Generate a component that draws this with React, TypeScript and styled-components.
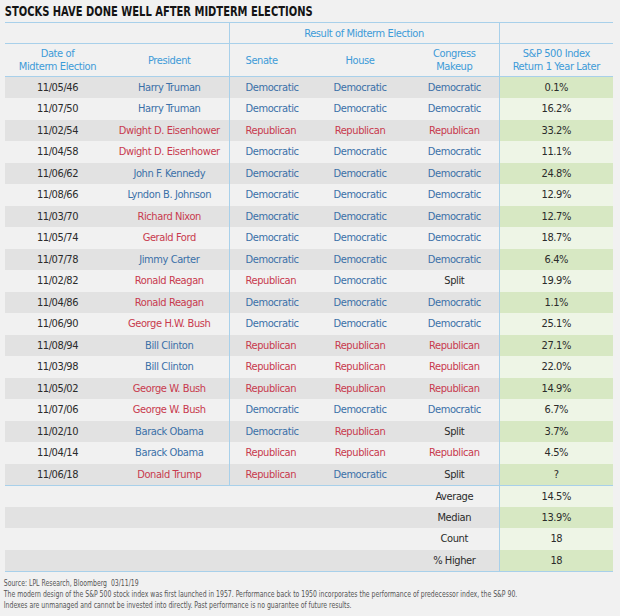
import React from 'react';
import styled, { createGlobalStyle } from 'styled-components';

const FONT = `"Liberation Sans Narrow", "DejaVu Sans Condensed", "Liberation Sans", sans-serif`;

const Global = createGlobalStyle`
  html, body {
    margin: 0;
    background: #f1f1f1;
  }
  body {
    font-family: ${FONT};
  }
`;

const Page = styled.div`
  width: 620px;
  height: 616px;
  background: #f1f1f1;
  overflow: hidden;
`;

const Title = styled.h1`
  margin: 0;
  padding-left: 6px;
  height: 22px;
  line-height: 22px;
  font-size: 14px;
  font-weight: 700;
  color: #141414;
  text-transform: uppercase;
  white-space: nowrap;
  transform: scaleX(0.79);
  transform-origin: 0 0;
`;

const Table = styled.table`
  margin-left: 5px;
  width: 608px;
  border-collapse: collapse;
  table-layout: fixed;
  font-size: 11px;
  letter-spacing: -0.4px;
`;

const TopRow = styled.tr`
  height: 21px;
  border-top: 1px solid #a8d0ea;
  border-bottom: 1px solid #a8d0ea;
`;

const ColRow = styled.tr`
  height: 33px;
  border-bottom: 1px solid #a8d0ea;
`;

const HeadCell = styled.th<{ $divider?: boolean; $align?: string }>`
  padding: 0;
  padding-left: ${p => (p.$align === 'left' ? '16px' : '0')};
  text-align: ${p => p.$align || 'center'};
  font-weight: 400;
  color: #3d9bd8;
  line-height: 13px;
  vertical-align: middle;
  border-left: ${p => (p.$divider ? '1px solid #a8d0ea' : 'none')};
`;

const Row = styled.tr<{ $dark: boolean }>`
  height: 21.5px;
  background: ${p => (p.$dark ? '#e2e2e2' : '#f1f1f1')};
`;

const SummaryRow = styled(Row)<{ $first?: boolean }>`
  border-top: ${p => (p.$first ? '1px solid #a8d0ea' : 'none')};
`;

const LastRow = styled(Row)`
  border-bottom: 1px solid #a8d0ea;
`;

const colors: Record<string, string> = {
  D: '#3a70a8',
  R: '#c83a4e',
  N: '#2b2b2b',
};

const Cell = styled.td<{ $tone?: string; $align?: string; $divider?: boolean }>`
  padding: 0;
  padding-left: ${p => (p.$align === 'left' ? '16px' : '0')};
  text-align: ${p => p.$align || 'center'};
  color: ${p => colors[p.$tone || 'N']};
  white-space: nowrap;
  border-left: ${p => (p.$divider ? '1px solid #a8d0ea' : 'none')};
`;

const ReturnCell = styled.td<{ $dark: boolean }>`
  padding: 0;
  text-align: center;
  color: #2b2b2b;
  border-left: 1px solid #a8d0ea;
  background: ${p => (p.$dark ? '#d7e8c3' : '#eef5e6')};
`;

const Notes = styled.div`
  width: 800px;
  padding: 6px 0 0 5px;
  font-size: 9px;
  line-height: 11px;
  color: #555;
  white-space: nowrap;
  transform: scaleX(0.76);
  transform-origin: 0 0;
`;

type Party = 'D' | 'R' | 'S';

interface Election {
  date: string;
  president: string;
  party: 'D' | 'R';
  senate: Party;
  house: Party;
  congress: Party;
  ret: string;
}

const data: Election[] = [
  { date: '11/05/46', president: 'Harry Truman', party: 'D', senate: 'D', house: 'D', congress: 'D', ret: '0.1%' },
  { date: '11/07/50', president: 'Harry Truman', party: 'D', senate: 'D', house: 'D', congress: 'D', ret: '16.2%' },
  { date: '11/02/54', president: 'Dwight D. Eisenhower', party: 'R', senate: 'R', house: 'R', congress: 'R', ret: '33.2%' },
  { date: '11/04/58', president: 'Dwight D. Eisenhower', party: 'R', senate: 'D', house: 'D', congress: 'D', ret: '11.1%' },
  { date: '11/06/62', president: 'John F. Kennedy', party: 'D', senate: 'D', house: 'D', congress: 'D', ret: '24.8%' },
  { date: '11/08/66', president: 'Lyndon B. Johnson', party: 'D', senate: 'D', house: 'D', congress: 'D', ret: '12.9%' },
  { date: '11/03/70', president: 'Richard Nixon', party: 'R', senate: 'D', house: 'D', congress: 'D', ret: '12.7%' },
  { date: '11/05/74', president: 'Gerald Ford', party: 'R', senate: 'D', house: 'D', congress: 'D', ret: '18.7%' },
  { date: '11/07/78', president: 'Jimmy Carter', party: 'D', senate: 'D', house: 'D', congress: 'D', ret: '6.4%' },
  { date: '11/02/82', president: 'Ronald Reagan', party: 'R', senate: 'R', house: 'D', congress: 'S', ret: '19.9%' },
  { date: '11/04/86', president: 'Ronald Reagan', party: 'R', senate: 'D', house: 'D', congress: 'D', ret: '1.1%' },
  { date: '11/06/90', president: 'George H.W. Bush', party: 'R', senate: 'D', house: 'D', congress: 'D', ret: '25.1%' },
  { date: '11/08/94', president: 'Bill Clinton', party: 'D', senate: 'R', house: 'R', congress: 'R', ret: '27.1%' },
  { date: '11/03/98', president: 'Bill Clinton', party: 'D', senate: 'R', house: 'R', congress: 'R', ret: '22.0%' },
  { date: '11/05/02', president: 'George W. Bush', party: 'R', senate: 'R', house: 'R', congress: 'R', ret: '14.9%' },
  { date: '11/07/06', president: 'George W. Bush', party: 'R', senate: 'D', house: 'D', congress: 'D', ret: '6.7%' },
  { date: '11/02/10', president: 'Barack Obama', party: 'D', senate: 'D', house: 'R', congress: 'S', ret: '3.7%' },
  { date: '11/04/14', president: 'Barack Obama', party: 'D', senate: 'R', house: 'R', congress: 'R', ret: '4.5%' },
  { date: '11/06/18', president: 'Donald Trump', party: 'R', senate: 'R', house: 'D', congress: 'S', ret: '?' },
];

const summary = [
  ['Average', '14.5%'],
  ['Median', '13.9%'],
  ['Count', '18'],
  ['% Higher', '18'],
];

const label = (p: Party) => (p === 'D' ? 'Democratic' : p === 'R' ? 'Republican' : 'Split');
const tone = (p: Party) => (p === 'S' ? 'N' : p);

const App: React.FC = () => {
  return (
    <Page>
      <Global />
      <Title>Stocks Have Done Well After Midterm Elections</Title>
      <Table>
        <colgroup>
          <col style={{ width: 105 }} />
          <col style={{ width: 119 }} />
          <col style={{ width: 81 }} />
          <col style={{ width: 100 }} />
          <col style={{ width: 89 }} />
          <col style={{ width: 114 }} />
        </colgroup>
        <thead>
          <TopRow>
            <HeadCell colSpan={2} />
            <HeadCell colSpan={3} $divider>Result of Midterm Election</HeadCell>
            <HeadCell $divider />
          </TopRow>
          <ColRow>
            <HeadCell>Date of<br />Midterm Election</HeadCell>
            <HeadCell>President</HeadCell>
            <HeadCell $divider $align="left">Senate</HeadCell>
            <HeadCell>House</HeadCell>
            <HeadCell>Congress<br />Makeup</HeadCell>
            <HeadCell $divider>S&amp;P 500 Index<br />Return 1 Year Later</HeadCell>
          </ColRow>
        </thead>
        <tbody>
          {data.map((d, i) => {
            const dark = i % 2 === 0;
            const R = i === data.length - 1 ? LastRow : Row;
            return (
              <R key={d.date} $dark={dark}>
                <Cell>{d.date}</Cell>
                <Cell $tone={d.party}>{d.president}</Cell>
                <Cell $tone={tone(d.senate)} $align="left" $divider>{label(d.senate)}</Cell>
                <Cell $tone={tone(d.house)}>{label(d.house)}</Cell>
                <Cell $tone={tone(d.congress)}>{label(d.congress)}</Cell>
                <ReturnCell $dark={dark}>{d.ret}</ReturnCell>
              </R>
            );
          })}
          {summary.map(([name, value], i) => {
            const dark = i % 2 === 1;
            const R = i === summary.length - 1 ? LastRow : SummaryRow;
            return (
              <R key={name} $dark={dark} $first={i === 0}>
                <Cell colSpan={4} />
                <Cell>{name}</Cell>
                <ReturnCell $dark={dark}>{value}</ReturnCell>
              </R>
            );
          })}
        </tbody>
      </Table>
      <Notes>
        Source: LPL Research, Bloomberg&nbsp; 03/11/19
        <br />
        The modern design of the S&amp;P 500 stock index was first launched in 1957. Performance back to 1950 incorporates the performance of predecessor index, the S&amp;P 90.
        <br />
        Indexes are unmanaged and cannot be invested into directly. Past performance is no guarantee of future results.
      </Notes>
    </Page>
  );
};

export default App;
